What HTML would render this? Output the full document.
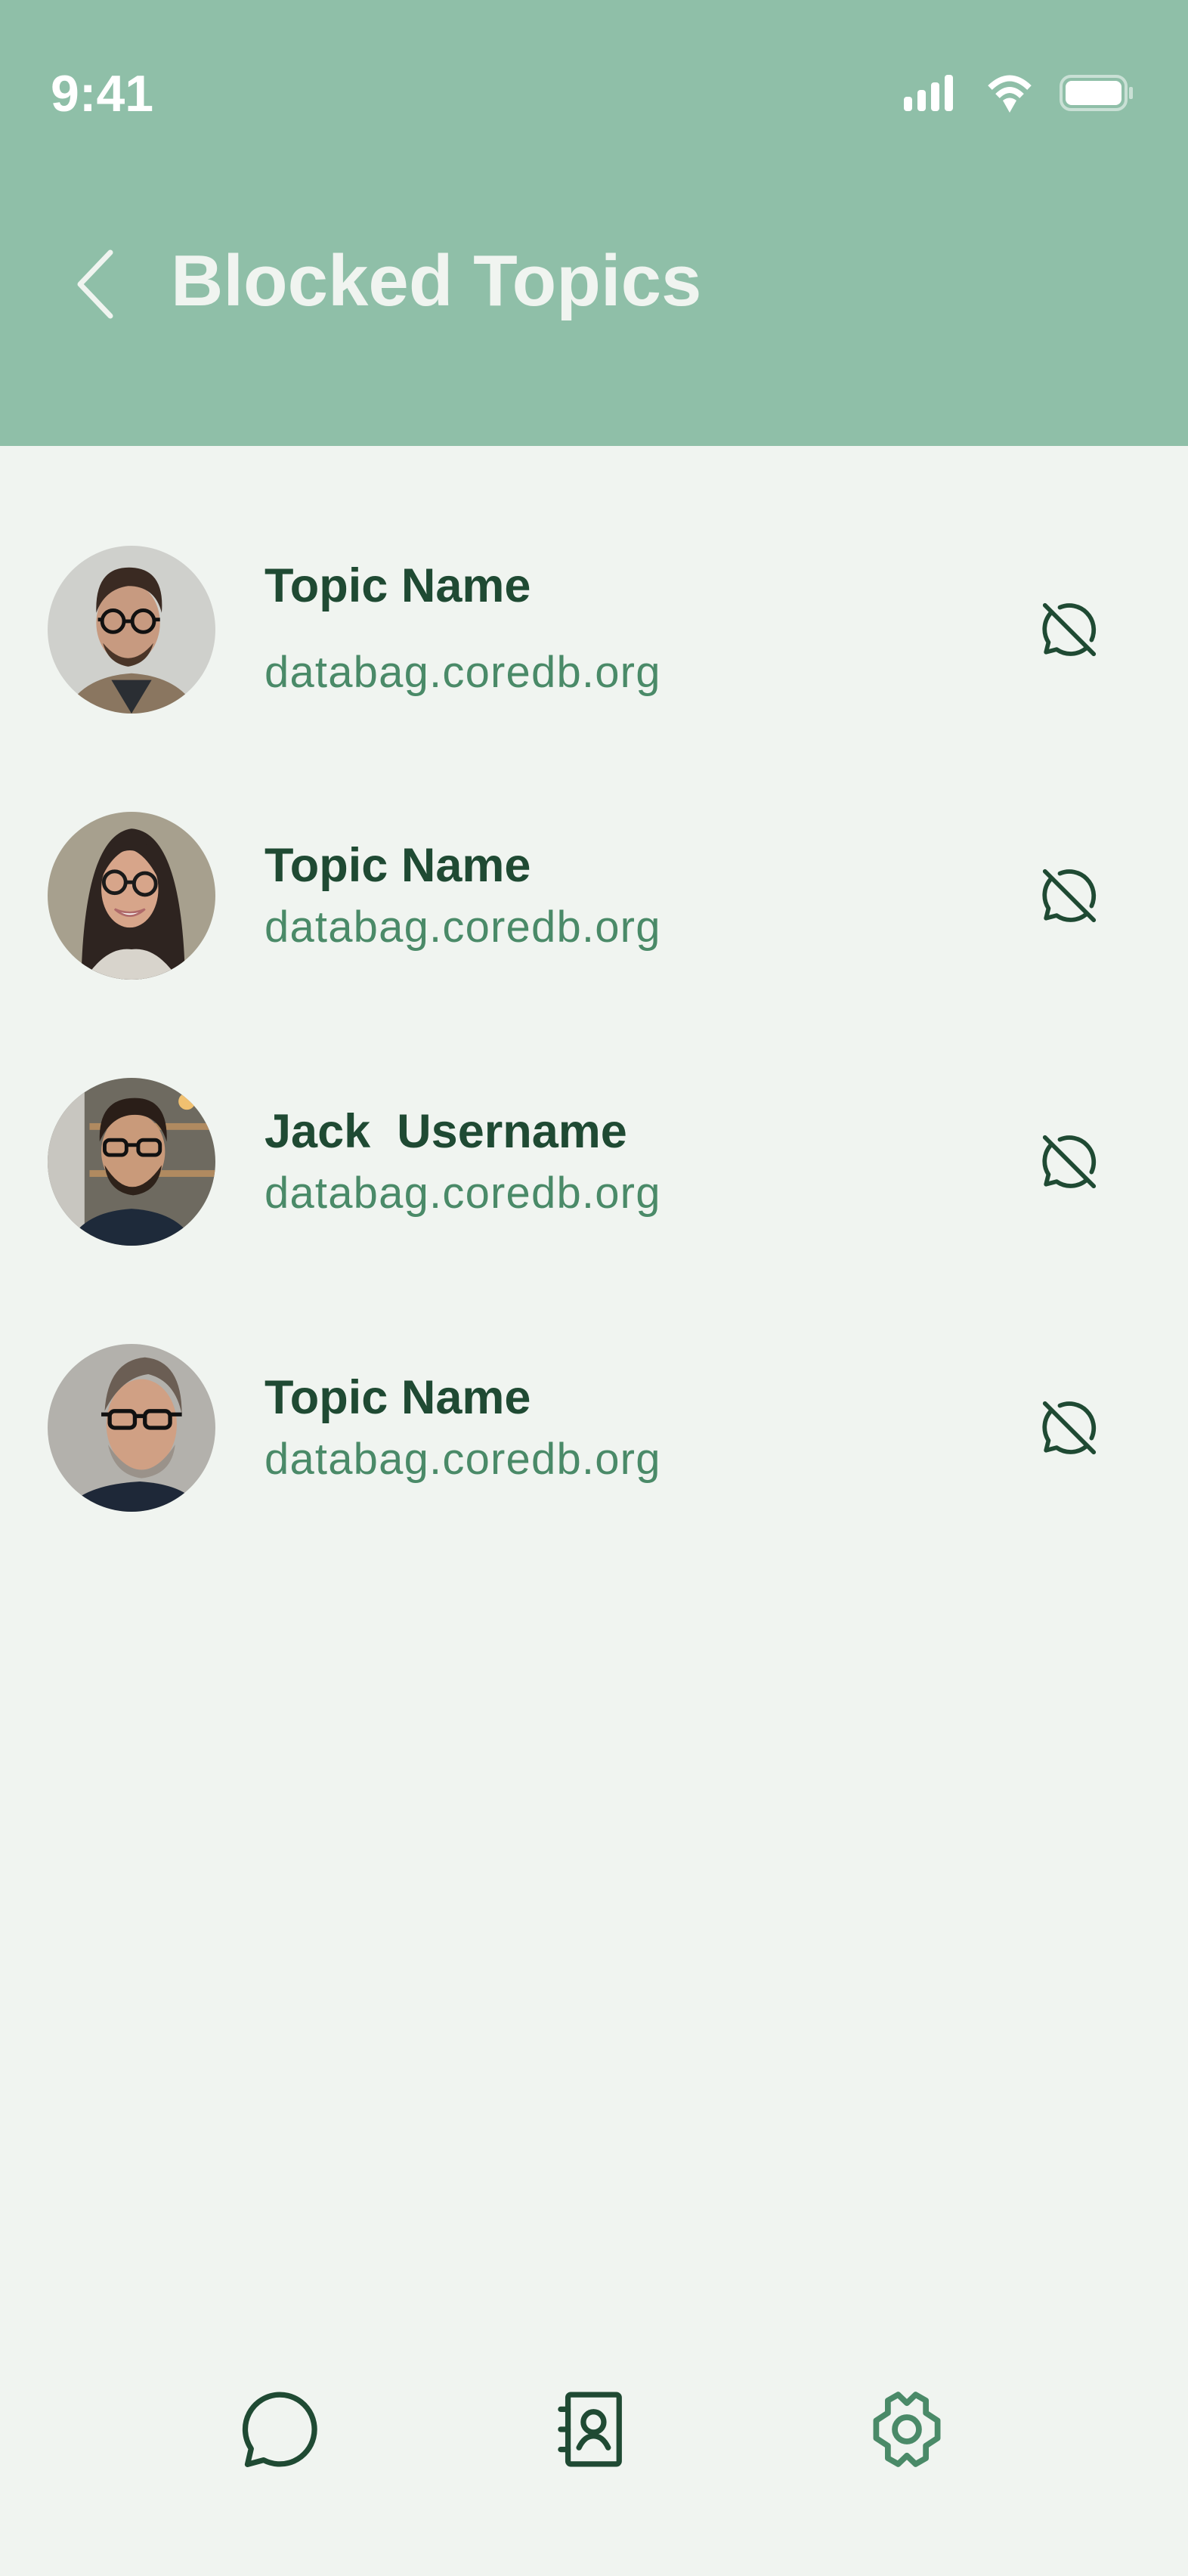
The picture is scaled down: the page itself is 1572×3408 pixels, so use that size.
<!DOCTYPE html>
<html><head><meta charset="utf-8">
<style>
*{margin:0;padding:0;box-sizing:border-box}
html,body{width:1572px;height:3408px;overflow:hidden;background:#f0f4f0;font-family:"Liberation Sans",sans-serif}
.hdr{position:absolute;left:0;top:0;width:1572px;height:590px;background:#8fbfa8}
.t{position:absolute;white-space:nowrap;line-height:1}
.name{font-size:63px;font-weight:bold;color:#1f4a33;left:350px}
.dom{font-size:58px;letter-spacing:1.2px;color:#4a8a68;left:350px}
.av{position:absolute;left:63px;width:222px;height:222px}
.ic{position:absolute;left:1372px;width:86px;height:86px}
</style></head><body>
<div class="hdr"></div>
<div class="t" style="left:67px;top:90px;font-size:68px;font-weight:bold;color:#fff">9:41</div>
<svg style="position:absolute;left:1190px;top:95px" width="320" height="60" viewBox="0 0 320 60">
 <rect x="6" y="33" width="11" height="19" rx="4" fill="#fff"/>
 <rect x="24" y="24" width="11" height="28" rx="4" fill="#fff"/>
 <rect x="42" y="14" width="11" height="38" rx="4" fill="#fff"/>
 <rect x="60" y="4" width="11" height="48" rx="4" fill="#fff"/>
 <path d="M146 54 L137 38 Q146 31 155 38 Z" fill="#fff"/>
 <path d="M130 32 Q146 16 162 32" stroke="#fff" stroke-width="8" fill="none"/>
 <path d="M120 21 Q146 -4 172 21" stroke="#fff" stroke-width="8" fill="none"/>
 <rect x="214" y="6" width="86" height="44" rx="13" fill="none" stroke="#c9e0d5" stroke-width="4"/>
 <rect x="220" y="12" width="74" height="32" rx="8" fill="#fff"/>
 <rect x="304" y="20" width="5" height="16" rx="2" fill="#c9e0d5"/>
</svg>
<svg style="position:absolute;left:90px;top:328px" width="70" height="96" viewBox="0 0 70 96"><path d="M56 6 L16 48 L56 90" stroke="#f0f4f0" stroke-width="7" fill="none" stroke-linecap="round" stroke-linejoin="round"/></svg>
<div class="t" style="left:226px;top:324px;font-size:96px;font-weight:bold;color:#f0f4f0">Blocked Topics</div>

<svg width="0" height="0" style="position:absolute"><defs>
<clipPath id="c"><circle cx="50" cy="50" r="50"/></clipPath>
<symbol id="blk" viewBox="0 0 24 24"><g fill="none" stroke="#1f4a33" stroke-width="1.6" stroke-linecap="round" stroke-linejoin="round"><path d="M3 3 L21 21"/><path d="M8.5 3.8 A9 9 0 0 1 20.2 15.8"/><path d="M5 6 A9 9 0 0 0 4.3 16.7 L3.4 20.3 L7.3 19.3 A9 9 0 0 0 18.5 18.6"/></g></symbol>
</defs></svg>

<svg class="av" style="top:722px" viewBox="0 0 100 100"><g clip-path="url(#c)"><rect width="100" height="100" fill="#cfd0cc"/><path d="M10 100 Q20 78 50 76 Q80 78 90 100Z" fill="#8a7660"/><path d="M38 80 L50 100 L62 80Z" fill="#2a2e33"/><ellipse cx="48" cy="46" rx="19" ry="24" fill="#c79a80"/><path d="M29 40 Q28 12 50 13 Q70 14 68 40 Q64 24 48 24 Q34 26 29 40Z" fill="#3a2a22"/><path d="M33 58 Q48 76 63 58 Q60 70 48 72 Q36 70 33 58Z" fill="#4a3528"/><g fill="none" stroke="#111" stroke-width="2.2"><circle cx="39" cy="45" r="6.5"/><circle cx="57" cy="45" r="6.5"/><path d="M45.5 45 H50.5 M32 44 H30 M64 44 H67"/></g></g></svg>
<div class="t name" style="top:744px">Topic Name</div>
<div class="t dom" style="top:861px">databag.coredb.org</div>
<svg class="ic" style="top:790px"><use href="#blk"/></svg>

<svg class="av" style="top:1074px" viewBox="0 0 100 100"><g clip-path="url(#c)"><rect width="100" height="100" fill="#a7a08e"/><path d="M20 100 Q22 14 50 10 Q80 12 82 100Z" fill="#2e2420"/><path d="M22 100 Q35 80 50 82 Q65 80 78 100Z" fill="#d8d4cc"/><ellipse cx="49" cy="46" rx="17" ry="23" fill="#d7a58a"/><path d="M32 40 Q34 18 50 16 Q66 18 66 40 Q58 24 48 22 Q38 26 32 40Z" fill="#2e2420"/><path d="M40 58 Q49 66 58 58 Q49 62 40 58Z" fill="#fff" stroke="#b06a6a" stroke-width="1.2"/><g fill="none" stroke="#1a1a1a" stroke-width="2.2"><circle cx="40" cy="42" r="6.5"/><circle cx="58" cy="43" r="6.5"/><path d="M46.5 42 H51.5"/></g></g></svg>
<div class="t name" style="top:1114px">Topic Name</div>
<div class="t dom" style="top:1198px">databag.coredb.org</div>
<svg class="ic" style="top:1142px"><use href="#blk"/></svg>

<svg class="av" style="top:1426px" viewBox="0 0 100 100"><g clip-path="url(#c)"><rect width="100" height="100" fill="#6e6a60"/><rect x="0" y="0" width="22" height="100" fill="#c8c6c0"/><rect x="25" y="27" width="75" height="4" fill="#b08a60"/><rect x="25" y="55" width="75" height="4" fill="#b08a60"/><circle cx="83" cy="14" r="5" fill="#f0c070"/><path d="M12 100 Q20 80 50 78 Q80 80 88 100Z" fill="#1e2a3a"/><ellipse cx="51" cy="44" rx="19" ry="23" fill="#c99a7a"/><path d="M31 38 Q30 12 52 12 Q72 12 71 38 Q66 22 52 22 Q38 22 31 38Z" fill="#2a1e18"/><path d="M34 52 Q50 78 68 52 Q66 68 51 70 Q36 68 34 52Z" fill="#2e221a"/><g fill="none" stroke="#111" stroke-width="2.2"><rect x="34" y="37" width="13" height="9" rx="3"/><rect x="54" y="37" width="13" height="9" rx="3"/><path d="M47 40 H54"/></g></g></svg>
<div class="t name" style="top:1466px">Jack&nbsp; Username</div>
<div class="t dom" style="top:1550px">databag.coredb.org</div>
<svg class="ic" style="top:1494px"><use href="#blk"/></svg>

<svg class="av" style="top:1778px" viewBox="0 0 100 100"><g clip-path="url(#c)"><rect width="100" height="100" fill="#b3b1ac"/><path d="M10 100 Q20 84 55 82 Q85 84 92 100Z" fill="#1e2838"/><ellipse cx="56" cy="48" rx="21" ry="27" fill="#d0a084"/><path d="M34 40 Q36 10 58 8 Q80 10 80 42 Q76 22 60 18 Q44 20 34 40Z" fill="#6b5e54"/><path d="M36 60 Q56 90 76 60 Q74 78 56 80 Q40 78 36 60Z" fill="#9a928a"/><g fill="none" stroke="#111" stroke-width="2.4"><rect x="37" y="40" width="15" height="10" rx="3"/><rect x="58" y="40" width="15" height="10" rx="3"/><path d="M52 43 H58 M73 42 H80 M37 42 H32"/></g></g></svg>
<div class="t name" style="top:1818px">Topic Name</div>
<div class="t dom" style="top:1902px">databag.coredb.org</div>
<svg class="ic" style="top:1846px"><use href="#blk"/></svg>

<svg style="position:absolute;left:312px;top:3156px" width="116" height="116" viewBox="0 0 24 24"><path d="M12 2.5 A9.5 9.5 0 1 1 7.6 20.4 L3.2 21.6 L4.2 17.3 A9.5 9.5 0 0 1 12 2.5Z" fill="none" stroke="#1f4a33" stroke-width="1.5" stroke-linejoin="round"/></svg>
<svg style="position:absolute;left:725px;top:3156px" width="116" height="116" viewBox="0 0 24 24"><g fill="none" stroke="#1f4a33" stroke-width="1.5" stroke-linecap="round"><rect x="5.5" y="2.5" width="14" height="19" rx="0.8"/><path d="M3.5 6.5 H5.5 M3.5 12 H5.5 M3.5 17.5 H5.5"/><circle cx="12.5" cy="10" r="2.8"/><path d="M8.5 17 Q10 13.8 12.5 13.8 Q15 13.8 16.5 17"/></g></svg>
<svg style="position:absolute;left:1142px;top:3156px" width="116" height="116" viewBox="0 0 24 24"><g fill="none" stroke="#4a8a68" stroke-width="1.6" stroke-linejoin="round"><path d="M9.6 2.5 L12 4.8 L14.4 2.5 L17.2 4.1 L17.2 7.5 L20.4 9.6 L20.4 14.4 L17.2 16.5 L17.2 19.9 L14.4 21.5 L12 19.2 L9.6 21.5 L6.8 19.9 L6.8 16.5 L3.6 14.4 L3.6 9.6 L6.8 7.5 L6.8 4.1 Z"/><circle cx="12" cy="12" r="3.3"/></g></svg>
</body></html>
